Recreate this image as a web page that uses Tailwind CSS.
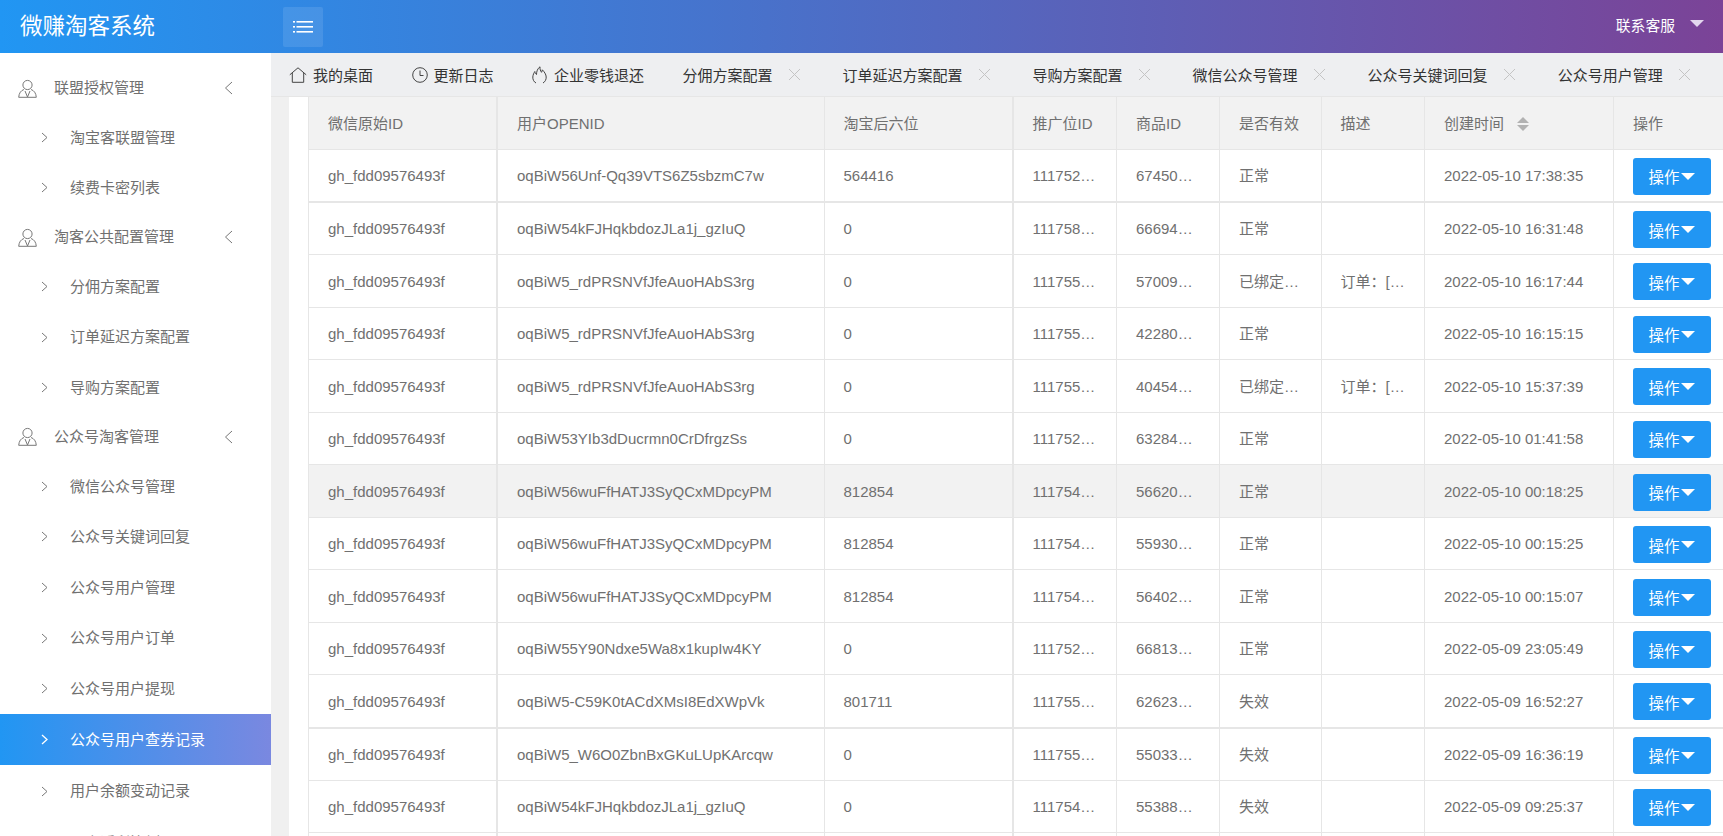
<!DOCTYPE html>
<html lang="zh-CN">

<head>
    <meta charset="UTF-8">
    <meta name="viewport" content="width=device-width, initial-scale=1.0">
    <title>微赚淘客系统</title>
    <script src="https://cdn.jsdelivr.net/npm/@tailwindcss/browser@4"></script>
</head>

<body class="h-screen overflow-hidden bg-[#f0f0f0] font-['Liberation_Sans','Noto_Sans_CJK_SC',sans-serif] text-[15px] text-[#707070]">

    <!-- Top bar -->
    <header class="flex h-[53px] items-center bg-linear-to-r/srgb from-[#2196f3] to-[#7b4397] text-white">
        <div class="w-[283px] pl-[20px] text-[22.5px]">微赚淘客系统</div>
        <button class="flex h-[40px] w-[40px] items-center justify-center rounded-[2px] bg-white/10">
            <svg class="h-[12px] w-[20px]" viewBox="0 0 20 12" fill="#fff">
                <rect x="0" y="0" width="2" height="1.6" />
                <rect x="3.5" y="0" width="16.5" height="1.6" />
                <rect x="0" y="5" width="2" height="1.6" />
                <rect x="3.5" y="5" width="16.5" height="1.6" />
                <rect x="0" y="10" width="2" height="1.6" />
                <rect x="3.5" y="10" width="16.5" height="1.6" />
            </svg>
        </button>
        <div class="ml-auto flex items-center pr-[19px]">
            <span class="text-[14.8px]">联系客服</span>
            <span class="mb-[6px] ml-[15px] h-0 w-0 border-x-[7px] border-t-[7px] border-x-transparent border-t-[#e3d6ee]"></span>
        </div>
    </header>

    <div class="flex h-[783px]">
        <!-- Sidebar -->
        <aside class="w-[270.5px] shrink-0 overflow-hidden bg-white pt-[11px]">
            <a class="flex h-[48px] items-center pl-[18px]">
                <svg class="h-[19px] w-[19px]" viewBox="0 0 19 19" fill="none" stroke="#777" stroke-width="1">
                    <circle cx="9.5" cy="6" r="4.6" />
                    <path d="M6 10.500C3 11.500 1 14 .7 18.300h17.600C18 14 16 11.500 13 10.500M7 12l2.500 6 2.500-6" />
                </svg>
                <span class="ml-[17px] pt-[1px]">联盟授权管理</span>
                <svg class="ml-auto mr-[38px] h-[14px] w-[9px]" viewBox="0 0 9 14" fill="none" stroke="#777"><path d="M8 1 1.500 7 8 13" /></svg>
            </a>
            <a class="flex h-[50.6px] items-center pl-[41px]">
                <svg class="h-[11px] w-[7px]" viewBox="0 0 7 11" fill="none" stroke="#777"><path d="m1 1 5 4.500L1 10" /></svg>
                <span class="ml-[22px] pt-[1px]">淘宝客联盟管理</span>
            </a>
            <a class="flex h-[50.6px] items-center pl-[41px]">
                <svg class="h-[11px] w-[7px]" viewBox="0 0 7 11" fill="none" stroke="#777"><path d="m1 1 5 4.500L1 10" /></svg>
                <span class="ml-[22px] pt-[1px]">续费卡密列表</span>
            </a>
            <a class="flex h-[48px] items-center pl-[18px]">
                <svg class="h-[19px] w-[19px]" viewBox="0 0 19 19" fill="none" stroke="#777" stroke-width="1">
                    <circle cx="9.5" cy="6" r="4.6" />
                    <path d="M6 10.500C3 11.500 1 14 .7 18.300h17.600C18 14 16 11.500 13 10.500M7 12l2.500 6 2.500-6" />
                </svg>
                <span class="ml-[17px] pt-[1px]">淘客公共配置管理</span>
                <svg class="ml-auto mr-[38px] h-[14px] w-[9px]" viewBox="0 0 9 14" fill="none" stroke="#777"><path d="M8 1 1.500 7 8 13" /></svg>
            </a>
            <a class="flex h-[50.6px] items-center pl-[41px]">
                <svg class="h-[11px] w-[7px]" viewBox="0 0 7 11" fill="none" stroke="#777"><path d="m1 1 5 4.500L1 10" /></svg>
                <span class="ml-[22px] pt-[1px]">分佣方案配置</span>
            </a>
            <a class="flex h-[50.6px] items-center pl-[41px]">
                <svg class="h-[11px] w-[7px]" viewBox="0 0 7 11" fill="none" stroke="#777"><path d="m1 1 5 4.500L1 10" /></svg>
                <span class="ml-[22px] pt-[1px]">订单延迟方案配置</span>
            </a>
            <a class="flex h-[50.6px] items-center pl-[41px]">
                <svg class="h-[11px] w-[7px]" viewBox="0 0 7 11" fill="none" stroke="#777"><path d="m1 1 5 4.500L1 10" /></svg>
                <span class="ml-[22px] pt-[1px]">导购方案配置</span>
            </a>
            <a class="flex h-[48px] items-center pl-[18px]">
                <svg class="h-[19px] w-[19px]" viewBox="0 0 19 19" fill="none" stroke="#777" stroke-width="1">
                    <circle cx="9.5" cy="6" r="4.6" />
                    <path d="M6 10.500C3 11.500 1 14 .7 18.300h17.600C18 14 16 11.500 13 10.500M7 12l2.500 6 2.500-6" />
                </svg>
                <span class="ml-[17px] pt-[1px]">公众号淘客管理</span>
                <svg class="ml-auto mr-[38px] h-[14px] w-[9px]" viewBox="0 0 9 14" fill="none" stroke="#777"><path d="M8 1 1.500 7 8 13" /></svg>
            </a>
            <a class="flex h-[50.6px] items-center pl-[41px]">
                <svg class="h-[11px] w-[7px]" viewBox="0 0 7 11" fill="none" stroke="#777"><path d="m1 1 5 4.500L1 10" /></svg>
                <span class="ml-[22px] pt-[1px]">微信公众号管理</span>
            </a>
            <a class="flex h-[50.6px] items-center pl-[41px]">
                <svg class="h-[11px] w-[7px]" viewBox="0 0 7 11" fill="none" stroke="#777"><path d="m1 1 5 4.500L1 10" /></svg>
                <span class="ml-[22px] pt-[1px]">公众号关键词回复</span>
            </a>
            <a class="flex h-[50.6px] items-center pl-[41px]">
                <svg class="h-[11px] w-[7px]" viewBox="0 0 7 11" fill="none" stroke="#777"><path d="m1 1 5 4.500L1 10" /></svg>
                <span class="ml-[22px] pt-[1px]">公众号用户管理</span>
            </a>
            <a class="flex h-[50.6px] items-center pl-[41px]">
                <svg class="h-[11px] w-[7px]" viewBox="0 0 7 11" fill="none" stroke="#777"><path d="m1 1 5 4.500L1 10" /></svg>
                <span class="ml-[22px] pt-[1px]">公众号用户订单</span>
            </a>
            <a class="flex h-[50.6px] items-center pl-[41px]">
                <svg class="h-[11px] w-[7px]" viewBox="0 0 7 11" fill="none" stroke="#777"><path d="m1 1 5 4.500L1 10" /></svg>
                <span class="ml-[22px] pt-[1px]">公众号用户提现</span>
            </a>
            <a class="flex h-[50.6px] items-center bg-linear-to-r/srgb from-[#2196f3] to-[#7a88e0] pl-[41px] text-white">
                <svg class="h-[11px] w-[7px]" viewBox="0 0 7 11" fill="none" stroke="#fff" stroke-width="1.3"><path d="m1 1 5 4.500L1 10" /></svg>
                <span class="ml-[22px] pt-[3px]">公众号用户查券记录</span>
            </a>
            <a class="flex h-[53px] items-center pl-[41px]">
                <svg class="h-[11px] w-[7px]" viewBox="0 0 7 11" fill="none" stroke="#777"><path d="m1 1 5 4.500L1 10" /></svg>
                <span class="ml-[22px] pt-[1px]">用户余额变动记录</span>
            </a>
            <a class="flex h-[50.6px] items-center pl-[41px]">
                <svg class="h-[11px] w-[7px]" viewBox="0 0 7 11" fill="none" stroke="#777"><path d="m1 1 5 4.500L1 10" /></svg>
                <span class="ml-[22px] pt-[1px]">用户返利比例配置</span>
            </a>
        </aside>

        <main class="min-w-0 flex-1">
            <!-- Open tabs -->
            <nav class="flex h-[44px] items-center overflow-hidden whitespace-nowrap border-b border-[#e6e6e6] bg-[#eeeff1] pl-[18.5px] text-[#333]">
                <div class="flex shrink-0 items-center gap-[6px] pr-[38.5px]">
                    <svg class="h-[16px] w-[18px]" viewBox="0 0 18 16" fill="none" stroke="#444"><path d="M.8 7.800 9 .8l8.200 7M3.300 6v9.300h11.400V6" /></svg>
                    <span class="pt-[4px]">我的桌面</span>
                </div>
                <div class="flex shrink-0 items-center gap-[6px] pr-[38.5px]">
                    <svg class="h-[16px] w-[16px]" viewBox="0 0 16 16" fill="none" stroke="#444"><circle cx="8" cy="8" r="7.300" /><path d="M8 3.500V8.500h3.500" /></svg>
                    <span class="pt-[4px]">更新日志</span>
                </div>
                <div class="flex shrink-0 items-center gap-[7px] pr-[38.5px]">
                    <svg class="h-[18px] w-[15px]" viewBox="0 0 15 18" fill="none" stroke="#444"><path d="M4 17C1.800 15.800.7 13.500.8 11 1 8.500 2 7 2.800 5.500 3.200 7 3.700 8 4.500 8.500 4.500 5.500 5.500 2.500 8 .8c-.2 2.500.5 4 1.500 5.500.5-.8.8-1.500.8-2.500 2 2 3.800 4.500 3.900 7.200.1 2.500-1 4.700-3.200 6" /></svg>
                    <span class="pt-[4px]">企业零钱退还</span>
                </div>
                <div class="flex shrink-0 items-center gap-[15px] pr-[42px]">
                    <span class="pt-[4px]">分佣方案配置</span>
                    <svg class="h-[13px] w-[13px]" viewBox="0 0 13 13" stroke="#c4c4c4"><path d="m1 1 11 11M12 1 1 12" /></svg>
                </div>
                <div class="flex shrink-0 items-center gap-[15px] pr-[42px]">
                    <span class="pt-[4px]">订单延迟方案配置</span>
                    <svg class="h-[13px] w-[13px]" viewBox="0 0 13 13" stroke="#c4c4c4"><path d="m1 1 11 11M12 1 1 12" /></svg>
                </div>
                <div class="flex shrink-0 items-center gap-[15px] pr-[42px]">
                    <span class="pt-[4px]">导购方案配置</span>
                    <svg class="h-[13px] w-[13px]" viewBox="0 0 13 13" stroke="#c4c4c4"><path d="m1 1 11 11M12 1 1 12" /></svg>
                </div>
                <div class="flex shrink-0 items-center gap-[15px] pr-[42px]">
                    <span class="pt-[4px]">微信公众号管理</span>
                    <svg class="h-[13px] w-[13px]" viewBox="0 0 13 13" stroke="#c4c4c4"><path d="m1 1 11 11M12 1 1 12" /></svg>
                </div>
                <div class="flex shrink-0 items-center gap-[15px] pr-[42px]">
                    <span class="pt-[4px]">公众号关键词回复</span>
                    <svg class="h-[13px] w-[13px]" viewBox="0 0 13 13" stroke="#c4c4c4"><path d="m1 1 11 11M12 1 1 12" /></svg>
                </div>
                <div class="flex shrink-0 items-center gap-[15px] pr-[42px]">
                    <span class="pt-[4px]">公众号用户管理</span>
                    <svg class="h-[13px] w-[13px]" viewBox="0 0 13 13" stroke="#c4c4c4"><path d="m1 1 11 11M12 1 1 12" /></svg>
                </div>
            </nav>

            <!-- Coupon lookup records -->
            <div class="h-[739px] overflow-hidden pl-[18.5px]">
                <div class="h-full bg-white pl-[19px]">
                    <table class="w-full table-fixed border-collapse [&_td]:h-[52.56px] [&_td]:truncate [&_td]:border [&_td]:border-[#e6e6e6] [&_td]:px-[19px] [&_td]:pt-[2px] [&_td:nth-child(1)]:border-r-2 [&_td:nth-child(3)]:border-r-2 [&_th]:h-[52.5px] [&_th]:border [&_th]:border-t-0 [&_th]:border-[#e6e6e6] [&_th]:bg-[#f2f2f2] [&_th]:px-[19px] [&_th]:pt-[2px] [&_th]:text-left [&_th]:font-normal [&_th:nth-child(1)]:border-r-2 [&_th:nth-child(3)]:border-r-2">
                        <colgroup>
                            <col class="w-[188.5px]"><col class="w-[327px]"><col class="w-[188.5px]"><col class="w-[104px]"><col class="w-[103px]"><col class="w-[101.5px]"><col class="w-[103.5px]"><col class="w-[189px]"><col class="w-[110px]">
                        </colgroup>
                        <thead>
                            <tr>
                                <th>微信原始ID</th>
                                <th>用户OPENID</th>
                                <th>淘宝后六位</th>
                                <th>推广位ID</th>
                                <th>商品ID</th>
                                <th>是否有效</th>
                                <th>描述</th>
                                <th>
                                    <span class="flex items-center gap-[13px]">创建时间
                                        <span class="flex flex-col gap-[2px]">
                                            <i class="h-0 w-0 border-x-[6px] border-b-[6px] border-x-transparent border-b-[#b2b2b2]"></i>
                                            <i class="h-0 w-0 border-x-[6px] border-t-[6px] border-x-transparent border-t-[#b2b2b2]"></i>
                                        </span>
                                    </span>
                                </th>
                                <th>操作</th>
                            </tr>
                        </thead>
                        <tbody>
                            <tr class="border-b-2 border-[#e6e6e6]">
                                <td>gh_fdd09576493f</td><td>oqBiW56Unf-Qq39VTS6Z5sbzmC7w</td><td>564416</td><td>111752…</td><td>67450…</td><td>正常</td><td></td><td>2022-05-10 17:38:35</td>
                                <td><button class="flex h-[37px] w-[78px] items-center justify-center gap-[2px] rounded-[3px] bg-[#2196f3] text-[15.4px] text-white"><span class="pt-[3px]">操作</span><i class="h-0 w-0 border-x-[7px] border-t-[7px] border-x-transparent border-t-white"></i></button></td>
                            </tr>
                            <tr>
                                <td>gh_fdd09576493f</td><td>oqBiW54kFJHqkbdozJLa1j_gzIuQ</td><td>0</td><td>111758…</td><td>66694…</td><td>正常</td><td></td><td>2022-05-10 16:31:48</td>
                                <td><button class="flex h-[37px] w-[78px] items-center justify-center gap-[2px] rounded-[3px] bg-[#2196f3] text-[15.4px] text-white"><span class="pt-[3px]">操作</span><i class="h-0 w-0 border-x-[7px] border-t-[7px] border-x-transparent border-t-white"></i></button></td>
                            </tr>
                            <tr>
                                <td>gh_fdd09576493f</td><td>oqBiW5_rdPRSNVfJfeAuoHAbS3rg</td><td>0</td><td>111755…</td><td>57009…</td><td>已绑定…</td><td>订单：[…</td><td>2022-05-10 16:17:44</td>
                                <td><button class="flex h-[37px] w-[78px] items-center justify-center gap-[2px] rounded-[3px] bg-[#2196f3] text-[15.4px] text-white"><span class="pt-[3px]">操作</span><i class="h-0 w-0 border-x-[7px] border-t-[7px] border-x-transparent border-t-white"></i></button></td>
                            </tr>
                            <tr>
                                <td>gh_fdd09576493f</td><td>oqBiW5_rdPRSNVfJfeAuoHAbS3rg</td><td>0</td><td>111755…</td><td>42280…</td><td>正常</td><td></td><td>2022-05-10 16:15:15</td>
                                <td><button class="flex h-[37px] w-[78px] items-center justify-center gap-[2px] rounded-[3px] bg-[#2196f3] text-[15.4px] text-white"><span class="pt-[3px]">操作</span><i class="h-0 w-0 border-x-[7px] border-t-[7px] border-x-transparent border-t-white"></i></button></td>
                            </tr>
                            <tr>
                                <td>gh_fdd09576493f</td><td>oqBiW5_rdPRSNVfJfeAuoHAbS3rg</td><td>0</td><td>111755…</td><td>40454…</td><td>已绑定…</td><td>订单：[…</td><td>2022-05-10 15:37:39</td>
                                <td><button class="flex h-[37px] w-[78px] items-center justify-center gap-[2px] rounded-[3px] bg-[#2196f3] text-[15.4px] text-white"><span class="pt-[3px]">操作</span><i class="h-0 w-0 border-x-[7px] border-t-[7px] border-x-transparent border-t-white"></i></button></td>
                            </tr>
                            <tr>
                                <td>gh_fdd09576493f</td><td>oqBiW53YIb3dDucrmn0CrDfrgzSs</td><td>0</td><td>111752…</td><td>63284…</td><td>正常</td><td></td><td>2022-05-10 01:41:58</td>
                                <td><button class="flex h-[37px] w-[78px] items-center justify-center gap-[2px] rounded-[3px] bg-[#2196f3] text-[15.4px] text-white"><span class="pt-[3px]">操作</span><i class="h-0 w-0 border-x-[7px] border-t-[7px] border-x-transparent border-t-white"></i></button></td>
                            </tr>
                            <tr class="bg-[#f2f2f2]">
                                <td>gh_fdd09576493f</td><td>oqBiW56wuFfHATJ3SyQCxMDpcyPM</td><td>812854</td><td>111754…</td><td>56620…</td><td>正常</td><td></td><td>2022-05-10 00:18:25</td>
                                <td><button class="flex h-[37px] w-[78px] items-center justify-center gap-[2px] rounded-[3px] bg-[#2196f3] text-[15.4px] text-white"><span class="pt-[3px]">操作</span><i class="h-0 w-0 border-x-[7px] border-t-[7px] border-x-transparent border-t-white"></i></button></td>
                            </tr>
                            <tr>
                                <td>gh_fdd09576493f</td><td>oqBiW56wuFfHATJ3SyQCxMDpcyPM</td><td>812854</td><td>111754…</td><td>55930…</td><td>正常</td><td></td><td>2022-05-10 00:15:25</td>
                                <td><button class="flex h-[37px] w-[78px] items-center justify-center gap-[2px] rounded-[3px] bg-[#2196f3] text-[15.4px] text-white"><span class="pt-[3px]">操作</span><i class="h-0 w-0 border-x-[7px] border-t-[7px] border-x-transparent border-t-white"></i></button></td>
                            </tr>
                            <tr>
                                <td>gh_fdd09576493f</td><td>oqBiW56wuFfHATJ3SyQCxMDpcyPM</td><td>812854</td><td>111754…</td><td>56402…</td><td>正常</td><td></td><td>2022-05-10 00:15:07</td>
                                <td><button class="flex h-[37px] w-[78px] items-center justify-center gap-[2px] rounded-[3px] bg-[#2196f3] text-[15.4px] text-white"><span class="pt-[3px]">操作</span><i class="h-0 w-0 border-x-[7px] border-t-[7px] border-x-transparent border-t-white"></i></button></td>
                            </tr>
                            <tr>
                                <td>gh_fdd09576493f</td><td>oqBiW55Y90Ndxe5Wa8x1kupIw4KY</td><td>0</td><td>111752…</td><td>66813…</td><td>正常</td><td></td><td>2022-05-09 23:05:49</td>
                                <td><button class="flex h-[37px] w-[78px] items-center justify-center gap-[2px] rounded-[3px] bg-[#2196f3] text-[15.4px] text-white"><span class="pt-[3px]">操作</span><i class="h-0 w-0 border-x-[7px] border-t-[7px] border-x-transparent border-t-white"></i></button></td>
                            </tr>
                            <tr class="border-b-2 border-[#e6e6e6]">
                                <td>gh_fdd09576493f</td><td>oqBiW5-C59K0tACdXMsI8EdXWpVk</td><td>801711</td><td>111755…</td><td>62623…</td><td>失效</td><td></td><td>2022-05-09 16:52:27</td>
                                <td><button class="flex h-[37px] w-[78px] items-center justify-center gap-[2px] rounded-[3px] bg-[#2196f3] text-[15.4px] text-white"><span class="pt-[3px]">操作</span><i class="h-0 w-0 border-x-[7px] border-t-[7px] border-x-transparent border-t-white"></i></button></td>
                            </tr>
                            <tr>
                                <td>gh_fdd09576493f</td><td>oqBiW5_W6O0ZbnBxGKuLUpKArcqw</td><td>0</td><td>111755…</td><td>55033…</td><td>失效</td><td></td><td>2022-05-09 16:36:19</td>
                                <td><button class="flex h-[37px] w-[78px] items-center justify-center gap-[2px] rounded-[3px] bg-[#2196f3] text-[15.4px] text-white"><span class="pt-[3px]">操作</span><i class="h-0 w-0 border-x-[7px] border-t-[7px] border-x-transparent border-t-white"></i></button></td>
                            </tr>
                            <tr>
                                <td>gh_fdd09576493f</td><td>oqBiW54kFJHqkbdozJLa1j_gzIuQ</td><td>0</td><td>111754…</td><td>55388…</td><td>失效</td><td></td><td>2022-05-09 09:25:37</td>
                                <td><button class="flex h-[37px] w-[78px] items-center justify-center gap-[2px] rounded-[3px] bg-[#2196f3] text-[15.4px] text-white"><span class="pt-[3px]">操作</span><i class="h-0 w-0 border-x-[7px] border-t-[7px] border-x-transparent border-t-white"></i></button></td>
                            </tr>
                            <tr>
                                <td></td><td></td><td></td><td></td><td></td><td></td><td></td><td></td><td></td>
                            </tr>
                        </tbody>
                    </table>
                </div>
            </div>
        </main>
    </div>

</body>

</html>
